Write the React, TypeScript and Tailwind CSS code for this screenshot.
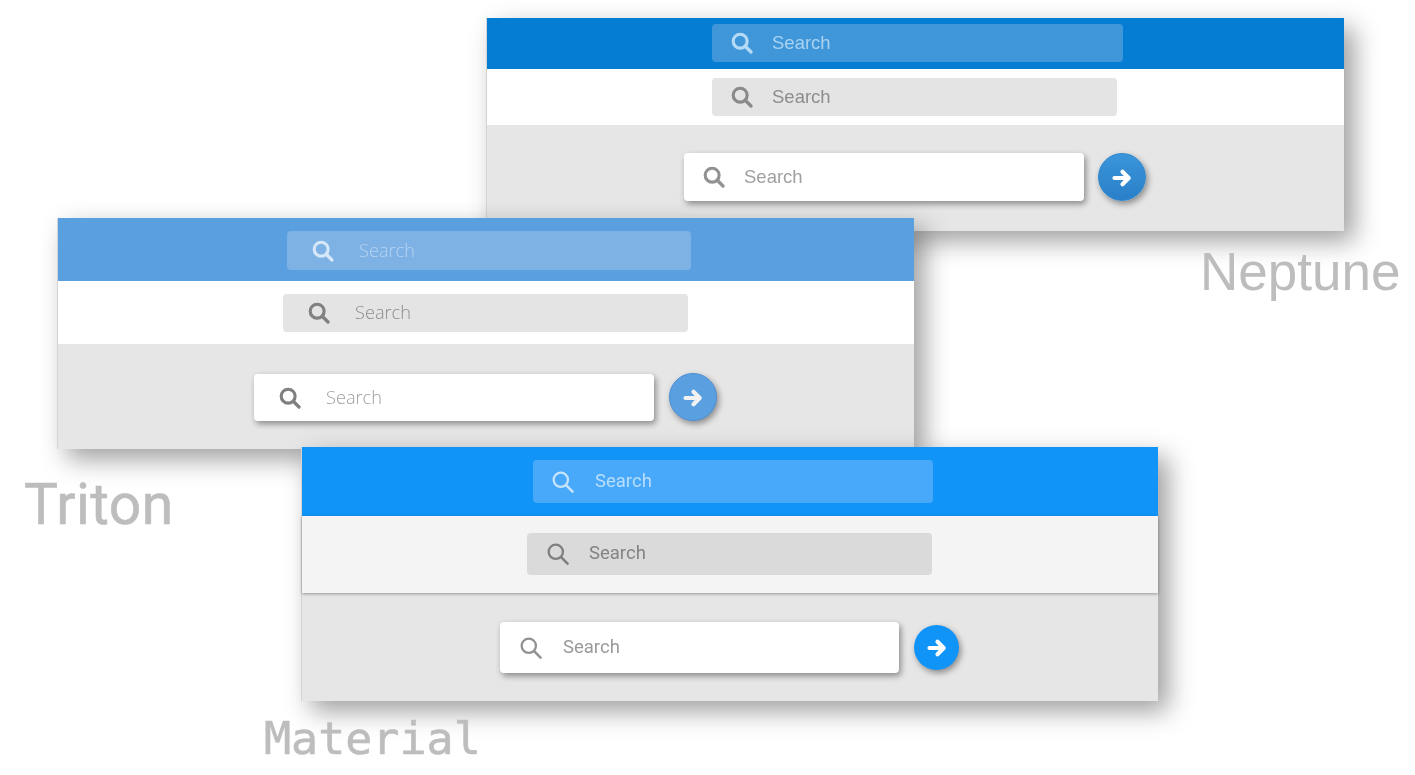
const ThickSearch = ({ className }: { className: string }) => (
  <svg viewBox="0 0 24 24" fill="none" stroke="currentColor" className={className}>
    <circle cx="10" cy="10" r="7.6" strokeWidth="3.4" />
    <path d="M15.8 15.8 L21.8 21.8" strokeWidth="3.6" strokeLinecap="round" />
  </svg>
);

const ThinSearch = ({ className }: { className: string }) => (
  <svg viewBox="0 0 24 24" fill="none" stroke="currentColor" className={className}>
    <circle cx="9.6" cy="9.6" r="7.8" strokeWidth="2.5" />
    <path d="M15.4 15.4 L22.4 22.4" strokeWidth="2.8" strokeLinecap="round" />
  </svg>
);

const Arrow = ({ className }: { className: string }) => (
  <svg viewBox="0 0 20 20" fill="none" stroke="currentColor" className={className}>
    <path d="M2.5 10 H15.5" strokeWidth="4.2" strokeLinecap="round" />
    <path d="M10.5 3.8 L16.7 10 L10.5 16.2" strokeWidth="4.2" strokeLinecap="round" strokeLinejoin="round" />
  </svg>
);

const neptune = "font-['Liberation_Sans',sans-serif] text-[18.5px]";
const triton = "font-['Open_Sans',sans-serif] font-light text-[18.2px]";
const material = "font-['Roboto',sans-serif] text-[18.5px]";
const iconBox = "w-[22px] h-[22px] shrink-0";

export default function App() {
  return (
    <div className="relative w-[1415px] h-[775px] overflow-hidden bg-white blur-[0.5px]">
      {/* Neptune */}
      <section className="absolute left-[486px] top-[18px] w-[858px] h-[213px] flex flex-col border-l border-[#d4d4d4] shadow-[10px_10px_24px_rgba(0,0,0,0.38)]">
        <div className="h-[51px] bg-[#047dd2] pl-[225px] pt-[6px]">
          <div className={`${neptune} w-[411px] h-[38px] rounded-[4px] bg-[#3f97d9] text-[#a9d2f1] flex items-center pl-[19px] gap-[19px]`}>
            <ThickSearch className={`${iconBox} text-[#b5daf5]`} />
            <span>Search</span>
          </div>
        </div>
        <div className="h-[56px] bg-white pl-[225px] pt-[9px]">
          <div className={`${neptune} w-[405px] h-[38px] rounded-[4px] bg-[#e4e4e4] text-[#8d8d8d] flex items-center pl-[19px] gap-[19px]`}>
            <ThickSearch className={`${iconBox} text-[#8a8a8a]`} />
            <span>Search</span>
          </div>
        </div>
        <div className="flex-1 bg-[#e6e6e6] pl-[197px] pt-[28px] flex items-start gap-[14px]">
          <div className={`${neptune} w-[400px] h-[48px] rounded-[4px] bg-white text-[#a0a0a0] flex items-center pl-[19px] gap-[19px] shadow-[2px_3px_6px_rgba(0,0,0,0.4)]`}>
            <ThickSearch className={`${iconBox} text-[#929292]`} />
            <span>Search</span>
          </div>
          <div className="w-[48px] h-[48px] rounded-full bg-gradient-to-b from-[#3a95da] to-[#2a80c8] border border-[#2f88cf] flex items-center justify-center shadow-[2px_3px_6px_rgba(0,0,0,0.4)]">
            <Arrow className="w-[20px] h-[20px] mt-[2px] text-white" />
          </div>
        </div>
      </section>
      <div className="absolute left-[1200px] top-[242px] font-['Liberation_Sans',sans-serif] text-[53px] leading-[60px] text-[#bdbdbd]">Neptune</div>

      {/* Triton */}
      <section className="absolute left-[57px] top-[218px] w-[857px] h-[231px] flex flex-col border-l border-[#d4d4d4] shadow-[10px_10px_24px_rgba(0,0,0,0.38)]">
        <div className="h-[63px] bg-[#5a9fdf] pl-[229px] pt-[13px]">
          <div className={`${triton} w-[404px] h-[39px] rounded-[4px] bg-[#7eb2e5] text-[#b4d3f1] flex items-center pl-[25px] gap-[25px]`}>
            <ThickSearch className={`${iconBox} text-[#d5e7f8]`} />
            <span>Search</span>
          </div>
        </div>
        <div className="h-[63px] bg-white pl-[225px] pt-[13px]">
          <div className={`${triton} w-[405px] h-[38px] rounded-[4px] bg-[#e4e4e4] text-[#8d8d8d] flex items-center pl-[25px] gap-[25px]`}>
            <ThickSearch className={`${iconBox} text-[#808080]`} />
            <span>Search</span>
          </div>
        </div>
        <div className="flex-1 bg-[#e6e6e6] pl-[196px] pt-[29px] flex items-start gap-[15px]">
          <div className={`${triton} mt-px w-[400px] h-[47px] rounded-[4px] bg-white text-[#a0a0a0] flex items-center pl-[25px] gap-[25px] shadow-[2px_3px_6px_rgba(0,0,0,0.4)]`}>
            <ThickSearch className={`${iconBox} text-[#808080]`} />
            <span>Search</span>
          </div>
          <div className="w-[48px] h-[48px] rounded-full bg-[#5a9fdf] border border-[#4a90d8] flex items-center justify-center shadow-[2px_3px_6px_rgba(0,0,0,0.4)]">
            <Arrow className="w-[20px] h-[20px] mt-[2px] text-[#f2f2f2]" />
          </div>
        </div>
      </section>
      <div className="absolute left-[24px] top-[471px] font-['Roboto',sans-serif] text-[57px] leading-[68px] tracking-[0.4px] [-webkit-text-stroke:0.6px_#bdbdbd] text-[#bdbdbd]">Triton</div>

      {/* Material */}
      <section className="absolute left-[301px] top-[447px] w-[857px] h-[254px] flex flex-col border-l border-[#d4d4d4] shadow-[10px_10px_24px_rgba(0,0,0,0.38)]">
        <div className="h-[69px] bg-[#1194f8] pl-[231px] pt-[13px]">
          <div className={`${material} w-[400px] h-[43px] rounded-[4px] bg-[#48a8f9] text-[#b9defc] flex items-center pl-[19px] gap-[21px]`}>
            <ThinSearch className={`${iconBox} text-[#c6e4fc]`} />
            <span>Search</span>
          </div>
        </div>
        <div className="h-[77px] bg-[#f4f4f4] pl-[225px] pt-[17px] relative z-10 shadow-[0_1px_3px_rgba(0,0,0,0.35)]">
          <div className={`${material} w-[405px] h-[42px] rounded-[4px] bg-[#dadada] text-[#848484] flex items-center pl-[20px] gap-[20px]`}>
            <ThinSearch className={`${iconBox} text-[#7f7f7f]`} />
            <span>Search</span>
          </div>
        </div>
        <div className="flex-1 bg-[#e6e6e6] pl-[198px] pt-[29px] flex items-start gap-[15px]">
          <div className={`${material} w-[399px] h-[51px] rounded-[4px] bg-white text-[#9a9a9a] flex items-center pl-[20px] gap-[21px] shadow-[2px_3px_6px_rgba(0,0,0,0.4)]`}>
            <ThinSearch className={`${iconBox} text-[#929292]`} />
            <span>Search</span>
          </div>
          <div className="mt-[3px] w-[45px] h-[45px] rounded-full bg-[#1194f8] flex items-center justify-center shadow-[2px_3px_6px_rgba(0,0,0,0.4)]">
            <Arrow className="w-[20px] h-[20px] mt-px text-white" />
          </div>
        </div>
      </section>
      <div className="absolute left-[264px] top-[712px] font-['DejaVu_Sans_Mono',monospace] text-[45px] leading-[54px] [-webkit-text-stroke:0.6px_#bdbdbd] text-[#bdbdbd]">Material</div>
    </div>
  );
}
